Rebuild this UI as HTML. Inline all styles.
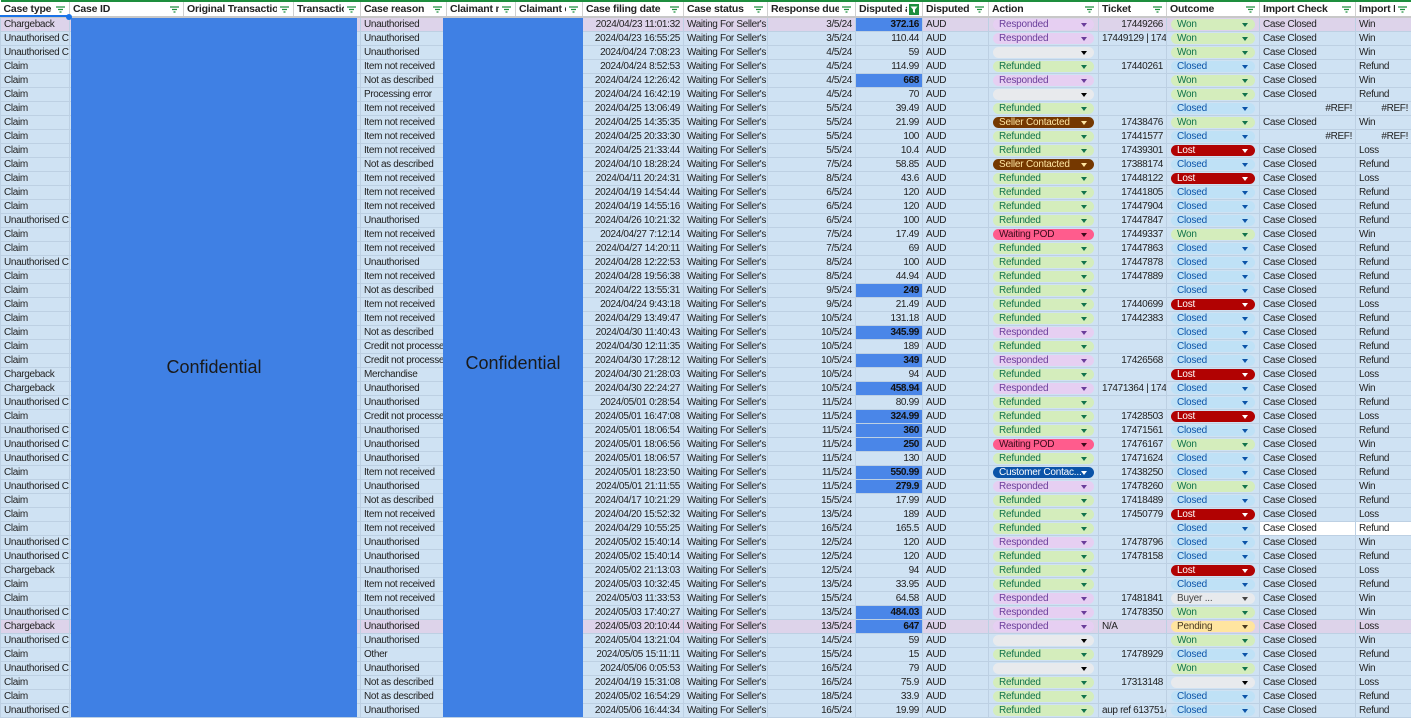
<!DOCTYPE html>
<html><head><meta charset="utf-8"><style>
*{box-sizing:border-box;margin:0;padding:0}
body{width:1411px;height:717px;overflow:hidden;background:#fff;font-family:"Liberation Sans",Arial,sans-serif;font-size:10px;color:#222;position:relative}
table{border-collapse:collapse;table-layout:fixed;width:1411px;position:absolute;top:0;left:0}
td{height:14px;line-height:13px;border:1px solid #bdd0e3;background:#cfe2f3;padding:0 3px;white-space:nowrap;overflow:hidden;letter-spacing:-0.35px}
tr.p td{background:#ddd3ea}
th{height:16px;border-top:2px solid #1e8e3e;border-right:1px solid #d0d0d0;border-bottom:2px solid #c8c8c8;background:#fff;text-align:left;font-weight:bold;font-size:10.5px;padding:0 3px;white-space:nowrap;overflow:hidden;position:relative;letter-spacing:-0.2px}
th svg{position:absolute;right:0;top:0;background:#fff;padding:4px 4px 3px 3px;box-sizing:content-box}
th svg.g{padding:2px 3px 1px 2px}
td.n{text-align:right}
td.h{background:#4a86e8!important;font-weight:bold;text-align:right;color:#111}
td.x{padding:0}
td.wh{background:#fff!important}
i{display:block;font-style:normal;height:11px;line-height:11px;border-radius:6px;margin:0 4px;padding-left:6px;position:relative;overflow:hidden;letter-spacing:-0.2px}
i:after{content:"";position:absolute;right:7px;top:4px;border-left:3px solid transparent;border-right:3px solid transparent;border-top:4px solid currentColor}
.r{background:#e6cff2;color:#6a3d9a}.f{background:#d4edbc;color:#11734b}.e{background:#e8eaed;color:#000}
.s{background:#753800;color:#ffe5a0}.w{background:#ff5c8d;color:#3a0a1a}.c{background:#0a53a8;color:#fff}
.W{background:#d4edbc;color:#11734b}.C{background:#bfe1f6;color:#0a53a8}.L{background:#b10202;color:#fff}
.P{background:#ffe5a0;color:#473821}.B{background:#e8eaed;color:#444}
.conf{position:absolute;top:18px;height:699px;background:#3f80e4;display:flex;align-items:center;justify-content:center;font-size:18px;color:#1a1a1a}
</style></head><body>
<table>
<colgroup><col style="width:69px"><col style="width:114px"><col style="width:110px"><col style="width:67px"><col style="width:86px"><col style="width:69px"><col style="width:67px"><col style="width:101px"><col style="width:84px"><col style="width:88px"><col style="width:67px"><col style="width:66px"><col style="width:110px"><col style="width:68px"><col style="width:93px"><col style="width:96px"><col style="width:56px"></colgroup>
<tr>
<th>Case type<svg width="9" height="7"><path d="M0 1h9M2 3.5h5M3.5 6h2" stroke="#1e8e3e" stroke-width="1.2"/></svg></th>
<th>Case ID<svg width="9" height="7"><path d="M0 1h9M2 3.5h5M3.5 6h2" stroke="#1e8e3e" stroke-width="1.2"/></svg></th>
<th>Original Transaction<svg width="9" height="7"><path d="M0 1h9M2 3.5h5M3.5 6h2" stroke="#1e8e3e" stroke-width="1.2"/></svg></th>
<th>Transaction<svg width="9" height="7"><path d="M0 1h9M2 3.5h5M3.5 6h2" stroke="#1e8e3e" stroke-width="1.2"/></svg></th>
<th>Case reason<svg width="9" height="7"><path d="M0 1h9M2 3.5h5M3.5 6h2" stroke="#1e8e3e" stroke-width="1.2"/></svg></th>
<th>Claimant name<svg width="9" height="7"><path d="M0 1h9M2 3.5h5M3.5 6h2" stroke="#1e8e3e" stroke-width="1.2"/></svg></th>
<th>Claimant email<svg width="9" height="7"><path d="M0 1h9M2 3.5h5M3.5 6h2" stroke="#1e8e3e" stroke-width="1.2"/></svg></th>
<th>Case filing date<svg width="9" height="7"><path d="M0 1h9M2 3.5h5M3.5 6h2" stroke="#1e8e3e" stroke-width="1.2"/></svg></th>
<th>Case status<svg width="9" height="7"><path d="M0 1h9M2 3.5h5M3.5 6h2" stroke="#1e8e3e" stroke-width="1.2"/></svg></th>
<th>Response due date<svg width="9" height="7"><path d="M0 1h9M2 3.5h5M3.5 6h2" stroke="#1e8e3e" stroke-width="1.2"/></svg></th>
<th>Disputed amount<svg class=g width="10" height="11"><rect width="10" height="11" fill="#1e8e3e"/><path d="M1.5 2.5h7l-2.5 3v3.5l-2-1v-2.5z" fill="#fff"/></svg></th>
<th>Disputed currency<svg width="9" height="7"><path d="M0 1h9M2 3.5h5M3.5 6h2" stroke="#1e8e3e" stroke-width="1.2"/></svg></th>
<th>Action<svg width="9" height="7"><path d="M0 1h9M2 3.5h5M3.5 6h2" stroke="#1e8e3e" stroke-width="1.2"/></svg></th>
<th>Ticket<svg width="9" height="7"><path d="M0 1h9M2 3.5h5M3.5 6h2" stroke="#1e8e3e" stroke-width="1.2"/></svg></th>
<th>Outcome<svg width="9" height="7"><path d="M0 1h9M2 3.5h5M3.5 6h2" stroke="#1e8e3e" stroke-width="1.2"/></svg></th>
<th>Import Check<svg width="9" height="7"><path d="M0 1h9M2 3.5h5M3.5 6h2" stroke="#1e8e3e" stroke-width="1.2"/></svg></th>
<th>Import Result<svg width="9" height="7"><path d="M0 1h9M2 3.5h5M3.5 6h2" stroke="#1e8e3e" stroke-width="1.2"/></svg></th>
</tr>
<tr class=p><td>Chargeback</td><td></td><td></td><td></td><td>Unauthorised</td><td></td><td></td><td class=n>2024/04/23 11:01:32</td><td>Waiting For Seller's R</td><td class=n>3/5/24</td><td class=h>372.16</td><td>AUD</td><td class=x><i class=r>Responded</i></td><td class=n>17449266</td><td class=x><i class=W>Won</i></td><td>Case Closed</td><td>Win</td></tr>
<tr><td>Unauthorised Claim</td><td></td><td></td><td></td><td>Unauthorised</td><td></td><td></td><td class=n>2024/04/23 16:55:25</td><td>Waiting For Seller's R</td><td class=n>3/5/24</td><td class=n>110.44</td><td>AUD</td><td class=x><i class=r>Responded</i></td><td>17449129 | 17449154</td><td class=x><i class=W>Won</i></td><td>Case Closed</td><td>Win</td></tr>
<tr><td>Unauthorised Claim</td><td></td><td></td><td></td><td>Unauthorised</td><td></td><td></td><td class=n>2024/04/24 7:08:23</td><td>Waiting For Seller's R</td><td class=n>4/5/24</td><td class=n>59</td><td>AUD</td><td class=x><i class=e></i></td><td></td><td class=x><i class=W>Won</i></td><td>Case Closed</td><td>Win</td></tr>
<tr><td>Claim</td><td></td><td></td><td></td><td>Item not received</td><td></td><td></td><td class=n>2024/04/24 8:52:53</td><td>Waiting For Seller's R</td><td class=n>4/5/24</td><td class=n>114.99</td><td>AUD</td><td class=x><i class=f>Refunded</i></td><td class=n>17440261</td><td class=x><i class=C>Closed</i></td><td>Case Closed</td><td>Refund</td></tr>
<tr><td>Claim</td><td></td><td></td><td></td><td>Not as described</td><td></td><td></td><td class=n>2024/04/24 12:26:42</td><td>Waiting For Seller's R</td><td class=n>4/5/24</td><td class=h>668</td><td>AUD</td><td class=x><i class=r>Responded</i></td><td></td><td class=x><i class=W>Won</i></td><td>Case Closed</td><td>Win</td></tr>
<tr><td>Claim</td><td></td><td></td><td></td><td>Processing error</td><td></td><td></td><td class=n>2024/04/24 16:42:19</td><td>Waiting For Seller's R</td><td class=n>4/5/24</td><td class=n>70</td><td>AUD</td><td class=x><i class=e></i></td><td></td><td class=x><i class=W>Won</i></td><td>Case Closed</td><td>Refund</td></tr>
<tr><td>Claim</td><td></td><td></td><td></td><td>Item not received</td><td></td><td></td><td class=n>2024/04/25 13:06:49</td><td>Waiting For Seller's R</td><td class=n>5/5/24</td><td class=n>39.49</td><td>AUD</td><td class=x><i class=f>Refunded</i></td><td></td><td class=x><i class=C>Closed</i></td><td class=n>#REF!</td><td class=n>#REF!</td></tr>
<tr><td>Claim</td><td></td><td></td><td></td><td>Item not received</td><td></td><td></td><td class=n>2024/04/25 14:35:35</td><td>Waiting For Seller's R</td><td class=n>5/5/24</td><td class=n>21.99</td><td>AUD</td><td class=x><i class=s>Seller Contacted</i></td><td class=n>17438476</td><td class=x><i class=W>Won</i></td><td>Case Closed</td><td>Win</td></tr>
<tr><td>Claim</td><td></td><td></td><td></td><td>Item not received</td><td></td><td></td><td class=n>2024/04/25 20:33:30</td><td>Waiting For Seller's R</td><td class=n>5/5/24</td><td class=n>100</td><td>AUD</td><td class=x><i class=f>Refunded</i></td><td class=n>17441577</td><td class=x><i class=C>Closed</i></td><td class=n>#REF!</td><td class=n>#REF!</td></tr>
<tr><td>Claim</td><td></td><td></td><td></td><td>Item not received</td><td></td><td></td><td class=n>2024/04/25 21:33:44</td><td>Waiting For Seller's R</td><td class=n>5/5/24</td><td class=n>10.4</td><td>AUD</td><td class=x><i class=f>Refunded</i></td><td class=n>17439301</td><td class=x><i class=L>Lost</i></td><td>Case Closed</td><td>Loss</td></tr>
<tr><td>Claim</td><td></td><td></td><td></td><td>Not as described</td><td></td><td></td><td class=n>2024/04/10 18:28:24</td><td>Waiting For Seller's R</td><td class=n>7/5/24</td><td class=n>58.85</td><td>AUD</td><td class=x><i class=s>Seller Contacted</i></td><td class=n>17388174</td><td class=x><i class=C>Closed</i></td><td>Case Closed</td><td>Refund</td></tr>
<tr><td>Claim</td><td></td><td></td><td></td><td>Item not received</td><td></td><td></td><td class=n>2024/04/11 20:24:31</td><td>Waiting For Seller's R</td><td class=n>8/5/24</td><td class=n>43.6</td><td>AUD</td><td class=x><i class=f>Refunded</i></td><td class=n>17448122</td><td class=x><i class=L>Lost</i></td><td>Case Closed</td><td>Loss</td></tr>
<tr><td>Claim</td><td></td><td></td><td></td><td>Item not received</td><td></td><td></td><td class=n>2024/04/19 14:54:44</td><td>Waiting For Seller's R</td><td class=n>6/5/24</td><td class=n>120</td><td>AUD</td><td class=x><i class=f>Refunded</i></td><td class=n>17441805</td><td class=x><i class=C>Closed</i></td><td>Case Closed</td><td>Refund</td></tr>
<tr><td>Claim</td><td></td><td></td><td></td><td>Item not received</td><td></td><td></td><td class=n>2024/04/19 14:55:16</td><td>Waiting For Seller's R</td><td class=n>6/5/24</td><td class=n>120</td><td>AUD</td><td class=x><i class=f>Refunded</i></td><td class=n>17447904</td><td class=x><i class=C>Closed</i></td><td>Case Closed</td><td>Refund</td></tr>
<tr><td>Unauthorised Claim</td><td></td><td></td><td></td><td>Unauthorised</td><td></td><td></td><td class=n>2024/04/26 10:21:32</td><td>Waiting For Seller's R</td><td class=n>6/5/24</td><td class=n>100</td><td>AUD</td><td class=x><i class=f>Refunded</i></td><td class=n>17447847</td><td class=x><i class=C>Closed</i></td><td>Case Closed</td><td>Refund</td></tr>
<tr><td>Claim</td><td></td><td></td><td></td><td>Item not received</td><td></td><td></td><td class=n>2024/04/27 7:12:14</td><td>Waiting For Seller's R</td><td class=n>7/5/24</td><td class=n>17.49</td><td>AUD</td><td class=x><i class=w>Waiting POD</i></td><td class=n>17449337</td><td class=x><i class=W>Won</i></td><td>Case Closed</td><td>Win</td></tr>
<tr><td>Claim</td><td></td><td></td><td></td><td>Item not received</td><td></td><td></td><td class=n>2024/04/27 14:20:11</td><td>Waiting For Seller's R</td><td class=n>7/5/24</td><td class=n>69</td><td>AUD</td><td class=x><i class=f>Refunded</i></td><td class=n>17447863</td><td class=x><i class=C>Closed</i></td><td>Case Closed</td><td>Refund</td></tr>
<tr><td>Unauthorised Claim</td><td></td><td></td><td></td><td>Unauthorised</td><td></td><td></td><td class=n>2024/04/28 12:22:53</td><td>Waiting For Seller's R</td><td class=n>8/5/24</td><td class=n>100</td><td>AUD</td><td class=x><i class=f>Refunded</i></td><td class=n>17447878</td><td class=x><i class=C>Closed</i></td><td>Case Closed</td><td>Refund</td></tr>
<tr><td>Claim</td><td></td><td></td><td></td><td>Item not received</td><td></td><td></td><td class=n>2024/04/28 19:56:38</td><td>Waiting For Seller's R</td><td class=n>8/5/24</td><td class=n>44.94</td><td>AUD</td><td class=x><i class=f>Refunded</i></td><td class=n>17447889</td><td class=x><i class=C>Closed</i></td><td>Case Closed</td><td>Refund</td></tr>
<tr><td>Claim</td><td></td><td></td><td></td><td>Not as described</td><td></td><td></td><td class=n>2024/04/22 13:55:31</td><td>Waiting For Seller's R</td><td class=n>9/5/24</td><td class=h>249</td><td>AUD</td><td class=x><i class=f>Refunded</i></td><td></td><td class=x><i class=C>Closed</i></td><td>Case Closed</td><td>Refund</td></tr>
<tr><td>Claim</td><td></td><td></td><td></td><td>Item not received</td><td></td><td></td><td class=n>2024/04/24 9:43:18</td><td>Waiting For Seller's R</td><td class=n>9/5/24</td><td class=n>21.49</td><td>AUD</td><td class=x><i class=f>Refunded</i></td><td class=n>17440699</td><td class=x><i class=L>Lost</i></td><td>Case Closed</td><td>Loss</td></tr>
<tr><td>Claim</td><td></td><td></td><td></td><td>Item not received</td><td></td><td></td><td class=n>2024/04/29 13:49:47</td><td>Waiting For Seller's R</td><td class=n>10/5/24</td><td class=n>131.18</td><td>AUD</td><td class=x><i class=f>Refunded</i></td><td class=n>17442383</td><td class=x><i class=C>Closed</i></td><td>Case Closed</td><td>Refund</td></tr>
<tr><td>Claim</td><td></td><td></td><td></td><td>Not as described</td><td></td><td></td><td class=n>2024/04/30 11:40:43</td><td>Waiting For Seller's R</td><td class=n>10/5/24</td><td class=h>345.99</td><td>AUD</td><td class=x><i class=r>Responded</i></td><td></td><td class=x><i class=C>Closed</i></td><td>Case Closed</td><td>Refund</td></tr>
<tr><td>Claim</td><td></td><td></td><td></td><td>Credit not processed</td><td></td><td></td><td class=n>2024/04/30 12:11:35</td><td>Waiting For Seller's R</td><td class=n>10/5/24</td><td class=n>189</td><td>AUD</td><td class=x><i class=f>Refunded</i></td><td></td><td class=x><i class=C>Closed</i></td><td>Case Closed</td><td>Refund</td></tr>
<tr><td>Claim</td><td></td><td></td><td></td><td>Credit not processed</td><td></td><td></td><td class=n>2024/04/30 17:28:12</td><td>Waiting For Seller's R</td><td class=n>10/5/24</td><td class=h>349</td><td>AUD</td><td class=x><i class=r>Responded</i></td><td class=n>17426568</td><td class=x><i class=C>Closed</i></td><td>Case Closed</td><td>Refund</td></tr>
<tr><td>Chargeback</td><td></td><td></td><td></td><td>Merchandise</td><td></td><td></td><td class=n>2024/04/30 21:28:03</td><td>Waiting For Seller's R</td><td class=n>10/5/24</td><td class=n>94</td><td>AUD</td><td class=x><i class=f>Refunded</i></td><td></td><td class=x><i class=L>Lost</i></td><td>Case Closed</td><td>Loss</td></tr>
<tr><td>Chargeback</td><td></td><td></td><td></td><td>Unauthorised</td><td></td><td></td><td class=n>2024/04/30 22:24:27</td><td>Waiting For Seller's R</td><td class=n>10/5/24</td><td class=h>458.94</td><td>AUD</td><td class=x><i class=r>Responded</i></td><td>17471364 | 17471390</td><td class=x><i class=C>Closed</i></td><td>Case Closed</td><td>Win</td></tr>
<tr><td>Unauthorised Claim</td><td></td><td></td><td></td><td>Unauthorised</td><td></td><td></td><td class=n>2024/05/01 0:28:54</td><td>Waiting For Seller's R</td><td class=n>11/5/24</td><td class=n>80.99</td><td>AUD</td><td class=x><i class=f>Refunded</i></td><td></td><td class=x><i class=C>Closed</i></td><td>Case Closed</td><td>Refund</td></tr>
<tr><td>Claim</td><td></td><td></td><td></td><td>Credit not processed</td><td></td><td></td><td class=n>2024/05/01 16:47:08</td><td>Waiting For Seller's R</td><td class=n>11/5/24</td><td class=h>324.99</td><td>AUD</td><td class=x><i class=f>Refunded</i></td><td class=n>17428503</td><td class=x><i class=L>Lost</i></td><td>Case Closed</td><td>Loss</td></tr>
<tr><td>Unauthorised Claim</td><td></td><td></td><td></td><td>Unauthorised</td><td></td><td></td><td class=n>2024/05/01 18:06:54</td><td>Waiting For Seller's R</td><td class=n>11/5/24</td><td class=h>360</td><td>AUD</td><td class=x><i class=f>Refunded</i></td><td class=n>17471561</td><td class=x><i class=C>Closed</i></td><td>Case Closed</td><td>Refund</td></tr>
<tr><td>Unauthorised Claim</td><td></td><td></td><td></td><td>Unauthorised</td><td></td><td></td><td class=n>2024/05/01 18:06:56</td><td>Waiting For Seller's R</td><td class=n>11/5/24</td><td class=h>250</td><td>AUD</td><td class=x><i class=w>Waiting POD</i></td><td class=n>17476167</td><td class=x><i class=W>Won</i></td><td>Case Closed</td><td>Win</td></tr>
<tr><td>Unauthorised Claim</td><td></td><td></td><td></td><td>Unauthorised</td><td></td><td></td><td class=n>2024/05/01 18:06:57</td><td>Waiting For Seller's R</td><td class=n>11/5/24</td><td class=n>130</td><td>AUD</td><td class=x><i class=f>Refunded</i></td><td class=n>17471624</td><td class=x><i class=C>Closed</i></td><td>Case Closed</td><td>Refund</td></tr>
<tr><td>Claim</td><td></td><td></td><td></td><td>Item not received</td><td></td><td></td><td class=n>2024/05/01 18:23:50</td><td>Waiting For Seller's R</td><td class=n>11/5/24</td><td class=h>550.99</td><td>AUD</td><td class=x><i class=c>Customer Contac...</i></td><td class=n>17438250</td><td class=x><i class=C>Closed</i></td><td>Case Closed</td><td>Refund</td></tr>
<tr><td>Unauthorised Claim</td><td></td><td></td><td></td><td>Unauthorised</td><td></td><td></td><td class=n>2024/05/01 21:11:55</td><td>Waiting For Seller's R</td><td class=n>11/5/24</td><td class=h>279.9</td><td>AUD</td><td class=x><i class=r>Responded</i></td><td class=n>17478260</td><td class=x><i class=W>Won</i></td><td>Case Closed</td><td>Win</td></tr>
<tr><td>Claim</td><td></td><td></td><td></td><td>Not as described</td><td></td><td></td><td class=n>2024/04/17 10:21:29</td><td>Waiting For Seller's R</td><td class=n>15/5/24</td><td class=n>17.99</td><td>AUD</td><td class=x><i class=f>Refunded</i></td><td class=n>17418489</td><td class=x><i class=C>Closed</i></td><td>Case Closed</td><td>Refund</td></tr>
<tr><td>Claim</td><td></td><td></td><td></td><td>Item not received</td><td></td><td></td><td class=n>2024/04/20 15:52:32</td><td>Waiting For Seller's R</td><td class=n>13/5/24</td><td class=n>189</td><td>AUD</td><td class=x><i class=f>Refunded</i></td><td class=n>17450779</td><td class=x><i class=L>Lost</i></td><td>Case Closed</td><td>Loss</td></tr>
<tr><td>Claim</td><td></td><td></td><td></td><td>Item not received</td><td></td><td></td><td class=n>2024/04/29 10:55:25</td><td>Waiting For Seller's R</td><td class=n>16/5/24</td><td class=n>165.5</td><td>AUD</td><td class=x><i class=f>Refunded</i></td><td></td><td class=x><i class=C>Closed</i></td><td class=wh>Case Closed</td><td class=wh>Refund</td></tr>
<tr><td>Unauthorised Claim</td><td></td><td></td><td></td><td>Unauthorised</td><td></td><td></td><td class=n>2024/05/02 15:40:14</td><td>Waiting For Seller's R</td><td class=n>12/5/24</td><td class=n>120</td><td>AUD</td><td class=x><i class=r>Responded</i></td><td class=n>17478796</td><td class=x><i class=C>Closed</i></td><td>Case Closed</td><td>Win</td></tr>
<tr><td>Unauthorised Claim</td><td></td><td></td><td></td><td>Unauthorised</td><td></td><td></td><td class=n>2024/05/02 15:40:14</td><td>Waiting For Seller's R</td><td class=n>12/5/24</td><td class=n>120</td><td>AUD</td><td class=x><i class=f>Refunded</i></td><td class=n>17478158</td><td class=x><i class=C>Closed</i></td><td>Case Closed</td><td>Refund</td></tr>
<tr><td>Chargeback</td><td></td><td></td><td></td><td>Unauthorised</td><td></td><td></td><td class=n>2024/05/02 21:13:03</td><td>Waiting For Seller's R</td><td class=n>12/5/24</td><td class=n>94</td><td>AUD</td><td class=x><i class=f>Refunded</i></td><td></td><td class=x><i class=L>Lost</i></td><td>Case Closed</td><td>Loss</td></tr>
<tr><td>Claim</td><td></td><td></td><td></td><td>Item not received</td><td></td><td></td><td class=n>2024/05/03 10:32:45</td><td>Waiting For Seller's R</td><td class=n>13/5/24</td><td class=n>33.95</td><td>AUD</td><td class=x><i class=f>Refunded</i></td><td></td><td class=x><i class=C>Closed</i></td><td>Case Closed</td><td>Refund</td></tr>
<tr><td>Claim</td><td></td><td></td><td></td><td>Item not received</td><td></td><td></td><td class=n>2024/05/03 11:33:53</td><td>Waiting For Seller's R</td><td class=n>15/5/24</td><td class=n>64.58</td><td>AUD</td><td class=x><i class=r>Responded</i></td><td class=n>17481841</td><td class=x><i class=B>Buyer ...</i></td><td>Case Closed</td><td>Win</td></tr>
<tr><td>Unauthorised Claim</td><td></td><td></td><td></td><td>Unauthorised</td><td></td><td></td><td class=n>2024/05/03 17:40:27</td><td>Waiting For Seller's R</td><td class=n>13/5/24</td><td class=h>484.03</td><td>AUD</td><td class=x><i class=r>Responded</i></td><td class=n>17478350</td><td class=x><i class=W>Won</i></td><td>Case Closed</td><td>Win</td></tr>
<tr class=p><td>Chargeback</td><td></td><td></td><td></td><td>Unauthorised</td><td></td><td></td><td class=n>2024/05/03 20:10:44</td><td>Waiting For Seller's R</td><td class=n>13/5/24</td><td class=h>647</td><td>AUD</td><td class=x><i class=r>Responded</i></td><td>N/A</td><td class=x><i class=P>Pending</i></td><td>Case Closed</td><td>Loss</td></tr>
<tr><td>Unauthorised Claim</td><td></td><td></td><td></td><td>Unauthorised</td><td></td><td></td><td class=n>2024/05/04 13:21:04</td><td>Waiting For Seller's R</td><td class=n>14/5/24</td><td class=n>59</td><td>AUD</td><td class=x><i class=e></i></td><td></td><td class=x><i class=W>Won</i></td><td>Case Closed</td><td>Win</td></tr>
<tr><td>Claim</td><td></td><td></td><td></td><td>Other</td><td></td><td></td><td class=n>2024/05/05 15:11:11</td><td>Waiting For Seller's R</td><td class=n>15/5/24</td><td class=n>15</td><td>AUD</td><td class=x><i class=f>Refunded</i></td><td class=n>17478929</td><td class=x><i class=C>Closed</i></td><td>Case Closed</td><td>Refund</td></tr>
<tr><td>Unauthorised Claim</td><td></td><td></td><td></td><td>Unauthorised</td><td></td><td></td><td class=n>2024/05/06 0:05:53</td><td>Waiting For Seller's R</td><td class=n>16/5/24</td><td class=n>79</td><td>AUD</td><td class=x><i class=e></i></td><td></td><td class=x><i class=W>Won</i></td><td>Case Closed</td><td>Win</td></tr>
<tr><td>Claim</td><td></td><td></td><td></td><td>Not as described</td><td></td><td></td><td class=n>2024/04/19 15:31:08</td><td>Waiting For Seller's R</td><td class=n>16/5/24</td><td class=n>75.9</td><td>AUD</td><td class=x><i class=f>Refunded</i></td><td class=n>17313148</td><td class=x><i class=e></i></td><td>Case Closed</td><td>Loss</td></tr>
<tr><td>Claim</td><td></td><td></td><td></td><td>Not as described</td><td></td><td></td><td class=n>2024/05/02 16:54:29</td><td>Waiting For Seller's R</td><td class=n>18/5/24</td><td class=n>33.9</td><td>AUD</td><td class=x><i class=f>Refunded</i></td><td></td><td class=x><i class=C>Closed</i></td><td>Case Closed</td><td>Refund</td></tr>
<tr><td>Unauthorised Claim</td><td></td><td></td><td></td><td>Unauthorised</td><td></td><td></td><td class=n>2024/05/06 16:44:34</td><td>Waiting For Seller's R</td><td class=n>16/5/24</td><td class=n>19.99</td><td>AUD</td><td class=x><i class=f>Refunded</i></td><td>aup ref 61375149</td><td class=x><i class=C>Closed</i></td><td>Case Closed</td><td>Refund</td></tr>
</table>
<div class=conf style="left:71px;width:286px">Confidential</div>
<div class=conf style="left:443px;width:140px;padding-bottom:8px">Confidential</div>
<div style="position:absolute;left:66px;top:14px;width:6px;height:6px;border-radius:50%;background:#1a73e8"></div>
<div style="position:absolute;left:0;top:15px;width:69px;height:2px;background:#1a73e8"></div>
</body></html>
